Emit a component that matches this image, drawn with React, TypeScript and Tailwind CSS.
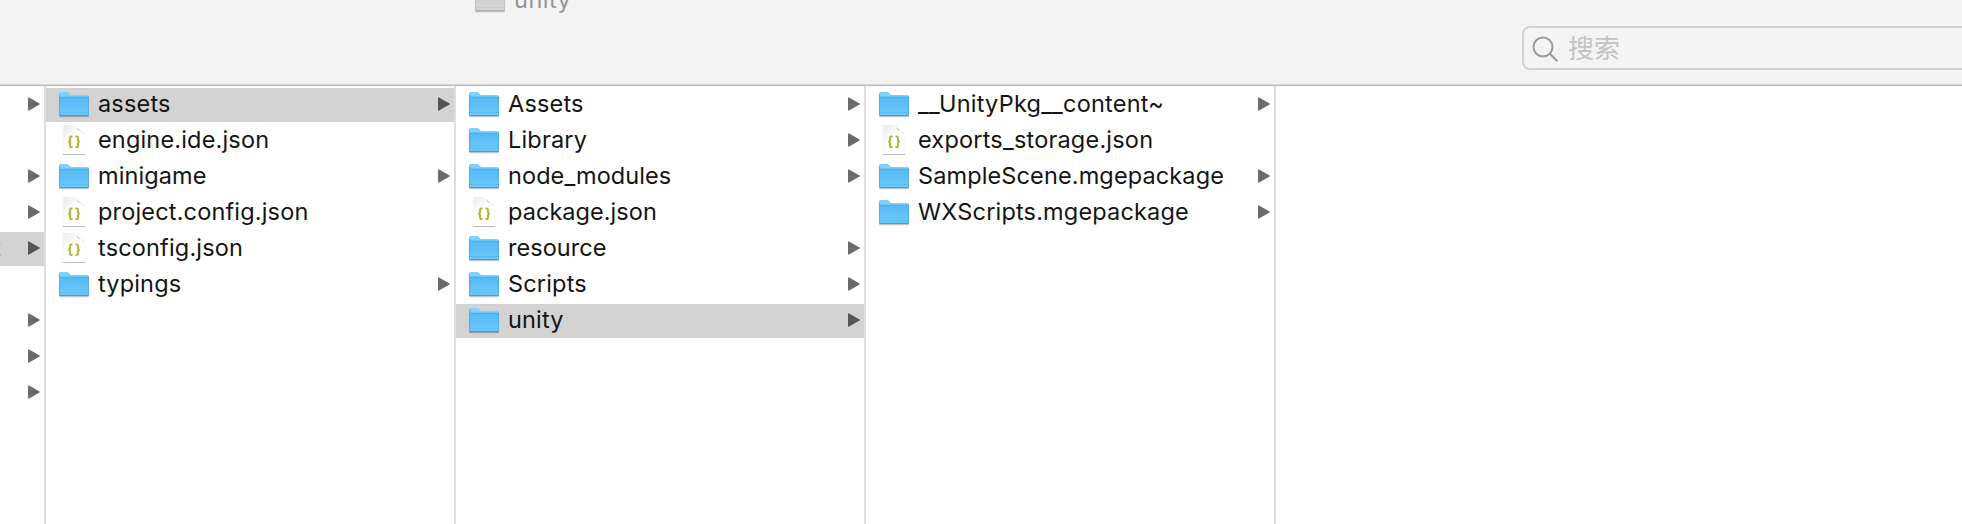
type Kind = "folder" | "json";
type Entry = { name: string; kind: Kind; selected?: boolean; tracking?: string };

const columns: Entry[][] = [
  [
    { name: "assets", kind: "folder", selected: true },
    { name: "engine.ide.json", kind: "json" },
    { name: "minigame", kind: "folder", tracking: "tracking-[0.1px]" },
    { name: "project.config.json", kind: "json" },
    { name: "tsconfig.json", kind: "json" },
    { name: "typings", kind: "folder" },
  ],
  [
    { name: "Assets", kind: "folder" },
    { name: "Library", kind: "folder" },
    { name: "node_modules", kind: "folder", tracking: "tracking-[0.08px]" },
    { name: "package.json", kind: "json", tracking: "tracking-[0.05px]" },
    { name: "resource", kind: "folder", tracking: "tracking-[0.05px]" },
    { name: "Scripts", kind: "folder" },
    { name: "unity", kind: "folder", selected: true },
  ],
  [
    { name: "__UnityPkg__content~", kind: "folder", tracking: "tracking-[0.23px]" },
    { name: "exports_storage.json", kind: "json", tracking: "tracking-[0.2px]" },
    { name: "SampleScene.mgepackage", kind: "folder", tracking: "tracking-[0.12px]" },
    { name: "WXScripts.mgepackage", kind: "folder" },
  ],
];

const parentRows = [
  { arrow: true },
  { arrow: false },
  { arrow: true },
  { arrow: true },
  { arrow: true, selected: true },
  { arrow: false },
  { arrow: true },
  { arrow: true },
  { arrow: true },
];

function Gradients() {
  return (
    <svg className="absolute h-0 w-0" aria-hidden="true">
      <defs>
        <linearGradient id="front" x1="0" y1="0" x2="0" y2="1">
          <stop offset="0" stopColor="#56b9f4" />
          <stop offset="1" stopColor="#6bc8fb" />
        </linearGradient>
        <linearGradient id="grayFront" x1="0" y1="0" x2="0" y2="1">
          <stop offset="0" stopColor="#cbcbcb" />
          <stop offset="1" stopColor="#d6d6d6" />
        </linearGradient>
        <linearGradient id="sheet" x1="0.2" y1="0" x2="0.6" y2="0.6">
          <stop offset="0" stopColor="#ededed" />
          <stop offset="0.6" stopColor="#fdfdfd" />
          <stop offset="1" stopColor="#ffffff" />
        </linearGradient>
        <linearGradient id="curl" x1="0" y1="1" x2="1" y2="0">
          <stop offset="0" stopColor="#ffffff" />
          <stop offset="0.5" stopColor="#d2d2d2" />
          <stop offset="1" stopColor="#f4f4f4" />
        </linearGradient>
      </defs>
    </svg>
  );
}

function FolderIcon({ gray = false }: { gray?: boolean }) {
  return (
    <svg width="32" height="28" viewBox="0 0 32 28" className="block shrink-0">
      <path d="M1.3 25.6h29.4" stroke="#000" strokeOpacity="0.22" strokeWidth="1.2" />
      <path
        d="M1 2.8C1 1.600 1.600 1 2.800 1h6.400c.9 0 1.500.3 2 1l.7 1c.5.7 1 .9 1.900.9h15.400c1.200 0 1.800.6 1.800 1.800V8H1z"
        fill={gray ? "#dcdcdc" : "#7fd0fb"}
      />
      <path d="M1 6.200h30v17.600c0 .7-.5 1.200-1.200 1.200H2.200C1.500 25 1 24.500 1 23.800z" fill={gray ? "url(#grayFront)" : "url(#front)"} />
      <path d="M1 6.200h30" stroke={gray ? "#b5b5b5" : "#46a5dc"} strokeWidth="0.9" />
      <path d="M1.500 21.600h29" stroke={gray ? "#c4c4c4" : "#58b6ea"} strokeWidth="0.8" />
      <path d="M1.400 24.600h29.200" stroke={gray ? "#b0b0b0" : "#3f97cb"} strokeWidth="1" />
      <path d="M1.400 3v21.500M30.600 6v18.500" stroke={gray ? "#b8b8b8" : "#4fa9dc"} strokeWidth="0.7" />
    </svg>
  );
}

function JsonIcon() {
  return (
    <svg width="32" height="32" viewBox="0 1 32 32" className="block shrink-0">
      <path d="M5 1h10.500L27 11.500V30H5z" fill="url(#sheet)" />
      <path d="M15.500 1c3 .8 3.300 3 3.800 5.500 3.200 0 6 .8 7.700 4.500L16.800 1.300z" fill="url(#curl)" />
      <path d="M27 11.500V30M5 2v28" stroke="#f7f7f7" strokeWidth="0.8" />
      <path d="M4.800 30.500h22.600" stroke="#bdbdbd" strokeWidth="1.100" />
      <g fill="none" stroke="#b4b52f" strokeWidth="1.900">
        <path d="M14.500 12.500h-1c-1.100 0-1.500.5-1.500 1.500v2.200c0 1-.5 1.500-1.800 1.500 1.300 0 1.800.6 1.800 1.500v2.200c0 1.100.4 1.600 1.500 1.600h1" />
        <path d="M17.500 12.500h1c1.100 0 1.500.5 1.500 1.500v2.200c0 1 .5 1.500 1.800 1.500-1.300 0-1.800.6-1.800 1.500v2.200c0 1.100-.4 1.600-1.500 1.600h-1" />
      </g>
    </svg>
  );
}

function Arrow({ dark = false }: { dark?: boolean }) {
  return (
    <svg width="12" height="14" viewBox="0 0 12 14" className="mb-0.5 block shrink-0">
      <path
        d="M.7 1v12L11.200 7z"
        fill={dark ? "#555555" : "#6b6b6b"}
        stroke={dark ? "#555555" : "#6b6b6b"}
        strokeWidth="1.400"
        strokeLinejoin="round"
      />
    </svg>
  );
}

function Row({ entry }: { entry: Entry }) {
  return (
    <li className={`flex h-[34px] items-center pl-3 pr-1 ${entry.selected ? "bg-[#d3d3d3]" : ""}`}>
      {entry.kind === "folder" ? <FolderIcon /> : <JsonIcon />}
      <span className={`ml-2 grow whitespace-nowrap pb-0.5 leading-8 ${entry.tracking ?? "tracking-[0.17px]"}`}>
        {entry.name}
      </span>
      {entry.kind === "folder" && <Arrow dark={entry.selected} />}
    </li>
  );
}

export default function App() {
  return (
    <div className="flex h-[524px] w-[1962px] flex-col overflow-hidden bg-white font-['Inter','Noto_Sans_CJK_SC',sans-serif] text-[23.5px] text-[#141414]">
      <Gradients />
      <header className="flex h-[86px] shrink-0 items-start justify-between border-b border-[#bdbdbd] bg-[#f3f3f3] shadow-[inset_0_-1px_0_#d9d9d9]">
        <div className="-mt-[17px] ml-[474px] flex items-center text-[#959595]">
          <FolderIcon gray />
          <span className="ml-2 leading-[34px] tracking-[0.5px]">unity</span>
        </div>
        <div className="mt-[26px] flex h-11 w-[440px] items-center rounded-l-lg border-2 border-r-0 border-[#d2d2d2] bg-[#f4f4f4] pl-2">
          <svg width="28" height="28" viewBox="0 0 28 28" className="block" fill="none" stroke="#9b9b9b" strokeWidth="2">
            <circle cx="11" cy="13" r="9.500" />
            <path d="M17.800 19.800l7.600 7.400" />
          </svg>
          <span className="ml-2 pt-0.5 text-[26px] leading-[38px] text-[#c3c3c3]">搜索</span>
        </div>
      </header>
      <main className="flex grow">
        <ul className="flex w-[46px] shrink-0 flex-col gap-0.5 border-r-2 border-[#dedede] pt-0.5">
          {parentRows.map((row, i) => (
            <li
              key={i}
              className={`flex h-[34px] items-center justify-between pr-1 ${row.selected ? "bg-[#d3d3d3]" : ""}`}
            >
              <span className="flex w-7 justify-start overflow-hidden">
                {row.selected && <span className="-ml-[7px] pb-0.5 leading-8 text-[#333333]">t</span>}
              </span>
              {row.arrow && <Arrow dark={row.selected} />}
            </li>
          ))}
        </ul>
        {columns.map((entries, i) => (
          <ul key={i} className="flex w-[410px] shrink-0 flex-col gap-0.5 border-r-2 border-[#dedede] pt-0.5">
            {entries.map((entry) => (
              <Row key={entry.name} entry={entry} />
            ))}
          </ul>
        ))}
      </main>
    </div>
  );
}
